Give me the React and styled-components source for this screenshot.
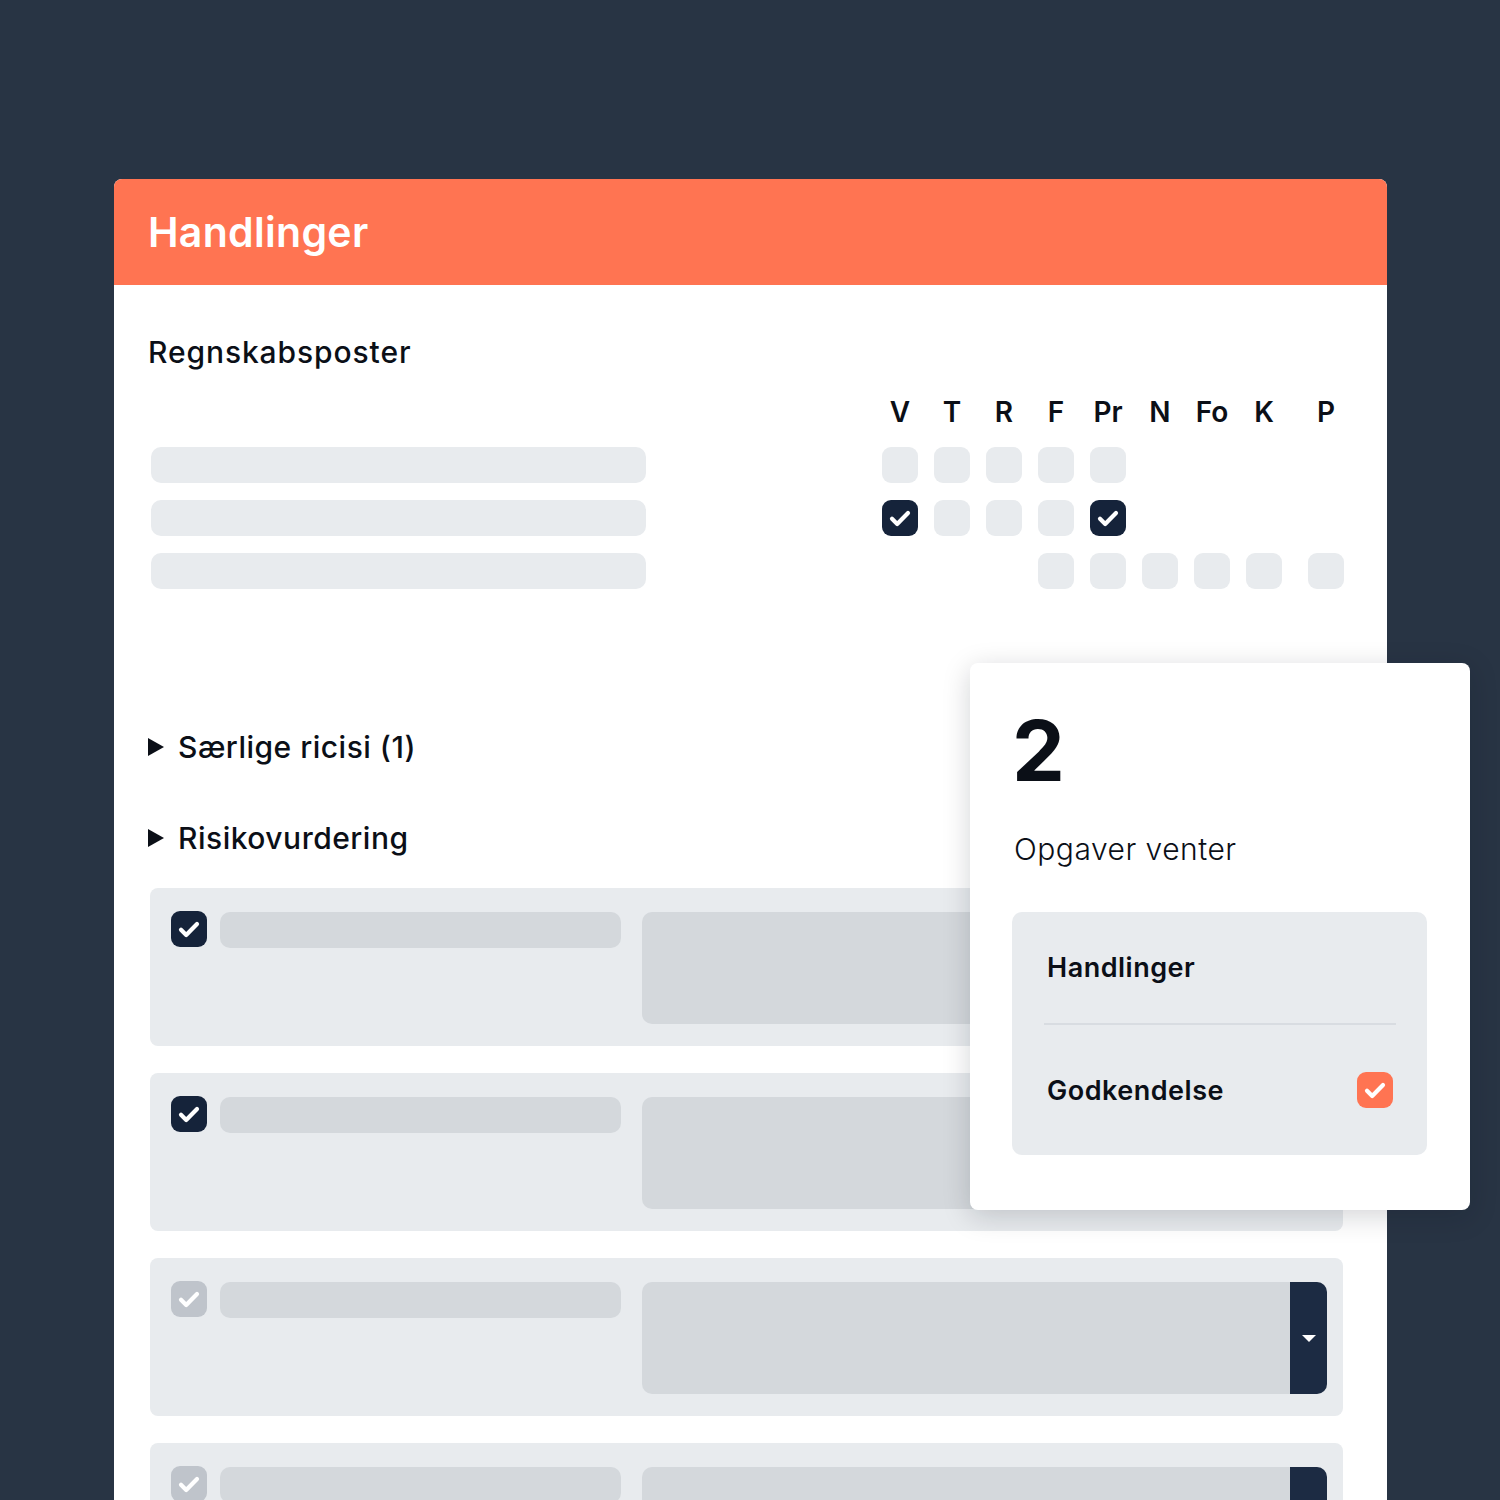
import React from 'react';
import styled, { createGlobalStyle } from 'styled-components';

const GlobalStyle = createGlobalStyle`
  html, body {
    margin: 0;
    padding: 0;
    background: #283444;
  }
  body {
    font-family: Inter, "Noto Sans", sans-serif;
    color: #0b0f17;
  }
`;

const columns = ['V', 'T', 'R', 'F', 'Pr', 'N', 'Fo', 'K', 'P'];

// which columns have a box per row: null = none, 0 = empty, 1 = checked
const rows = [
  [0, 0, 0, 0, 0, null, null, null, null],
  [1, 0, 0, 0, 1, null, null, null, null],
  [null, null, null, 0, 0, 0, 0, 0, 0],
];

const tasks = [
  { checked: true },
  { checked: true },
  { checked: false },
  { checked: false },
];

const Check = () => (
  <svg width="36" height="36" viewBox="0 0 36 36" fill="none">
    <path
      d="M10 18.8l5.2 5.2L26 13"
      stroke="#fff"
      strokeWidth="4.2"
      strokeLinecap="round"
      strokeLinejoin="round"
    />
  </svg>
);

export default function App() {
  return (
    <Page>
      <GlobalStyle />
      <Card>
        <CardHeader>Handlinger</CardHeader>
        <CardBody>
          <SectionTitle>Regnskabsposter</SectionTitle>
          <Grid>
            <span />
            <span />
            {columns.map((c, i) => (
              <ColLabel key={c} $last={i === columns.length - 1}>{c}</ColLabel>
            ))}
            {rows.map((row, r) => (
              <React.Fragment key={r}>
                <LineBar />
                <span />
                {row.map((v, i) =>
                  v === null ? (
                    <span key={i} />
                  ) : (
                    <Box key={i} $checked={v === 1} $last={i === columns.length - 1}>
                      {v === 1 && <Check />}
                    </Box>
                  )
                )}
              </React.Fragment>
            ))}
          </Grid>

          <Accordion $first>
            <Arrow />
            Særlige ricisi (1)
          </Accordion>
          <Accordion>
            <Arrow />
            Risikovurdering
          </Accordion>

          <TaskList>
            {tasks.map((t, i) => (
              <TaskCard key={i}>
                <TaskCheck $checked={t.checked}>
                  <Check />
                </TaskCheck>
                <TaskBar />
                <SelectBox>
                  <SelectButton>
                    <Caret />
                  </SelectButton>
                </SelectBox>
              </TaskCard>
            ))}
          </TaskList>
        </CardBody>
      </Card>

      <Popup>
        <BigNumber>2</BigNumber>
        <PopupLabel>Opgaver venter</PopupLabel>
        <InnerBox>
          <InnerRow $height={113} $divider>Handlinger</InnerRow>
          <InnerRow $height={130}>
            Godkendelse
            <OrangeCheck>
              <Check />
            </OrangeCheck>
          </InnerRow>
        </InnerBox>
      </Popup>
    </Page>
  );
}

const Page = styled.div`
  position: relative;
  height: 1500px;
  overflow: hidden;
  padding-top: 179px;
  box-sizing: border-box;
`;

const Card = styled.div`
  margin-left: 114px;
  width: 1273px;
  background: #fff;
  border-radius: 8px 8px 0 0;
  overflow: hidden;
`;

const CardHeader = styled.div`
  height: 106px;
  background: #ff7452;
  color: #fff;
  display: flex;
  align-items: center;
  padding-left: 34px;
  font-size: 41px;
  font-weight: 600;
  letter-spacing: 0.3px;
`;

const CardBody = styled.div`
  padding: 49px 43px 0 38px;
`;

const SectionTitle = styled.div`
  font-size: 30px;
  font-weight: 500;
  line-height: 36px;
  letter-spacing: 0.9px;
  margin-left: -4px;
  margin-bottom: 24px;
`;

const Grid = styled.div`
  display: grid;
  grid-template-columns: 494px 1fr repeat(8, 36px) 46px;
  grid-auto-rows: 36px;
  column-gap: 16px;
  row-gap: 17px;
  align-items: center;
`;

const ColLabel = styled.div`
  width: 36px;
  text-align: center;
  font-size: 28px;
  font-weight: 600;
  justify-self: ${(p) => (p.$last ? 'end' : 'start')};
`;

const LineBar = styled.div`
  height: 36px;
  margin-left: -1px;
  border-radius: 10px;
  background: #e8ebee;
`;

const Box = styled.div`
  width: 36px;
  height: 36px;
  border-radius: 9px;
  background: ${(p) => (p.$checked ? '#15233a' : '#e8ebee')};
  display: flex;
  align-items: center;
  justify-content: center;
  justify-self: ${(p) => (p.$last ? 'end' : 'start')};
`;

const Accordion = styled.div`
  display: flex;
  align-items: center;
  gap: 14px;
  margin-left: -4px;
  margin-top: ${(p) => (p.$first ? '138px' : '51px')};
  font-size: 30px;
  font-weight: 500;
  line-height: 40px;
  letter-spacing: 0.5px;
`;

const Arrow = styled.span`
  width: 0;
  height: 0;
  border-left: 16px solid #0b0f17;
  border-top: 9px solid transparent;
  border-bottom: 9px solid transparent;
`;

const TaskList = styled.div`
  margin: 30px 1px 0 -2px;
  display: flex;
  flex-direction: column;
  gap: 27px;
`;

const TaskCard = styled.div`
  display: flex;
  align-items: flex-start;
  height: 158px;
  box-sizing: border-box;
  padding: 23px 16px 22px 21px;
  background: #e8ebee;
  border-radius: 8px;
`;

const TaskCheck = styled.div`
  width: 36px;
  height: 36px;
  flex: none;
  border-radius: 9px;
  background: ${(p) => (p.$checked ? '#15233a' : '#bfc4cb')};
  display: flex;
  align-items: center;
  justify-content: center;
`;

const TaskBar = styled.div`
  width: 401px;
  height: 36px;
  margin: 1px 0 0 13px;
  border-radius: 10px;
  background: #d4d8dc;
`;

const SelectBox = styled.div`
  flex: 1;
  height: 112px;
  margin: 1px 0 0 21px;
  border-radius: 10px;
  background: #d4d8dc;
  display: flex;
  justify-content: flex-end;
  overflow: hidden;
`;

const SelectButton = styled.div`
  width: 37px;
  background: #1c2b43;
  display: flex;
  align-items: center;
  justify-content: center;
`;

const Caret = styled.span`
  width: 0;
  height: 0;
  border-top: 7px solid #fff;
  border-left: 7px solid transparent;
  border-right: 7px solid transparent;
`;

const Popup = styled.div`
  position: absolute;
  left: 970px;
  top: 663px;
  width: 500px;
  height: 547px;
  box-sizing: border-box;
  padding: 0 43px 0 42px;
  background: #fff;
  border-radius: 8px;
  box-shadow: 0 6px 28px rgba(10, 18, 30, 0.18);
`;

const BigNumber = styled.div`
  font-size: 84px;
  font-weight: 700;
  line-height: 84px;
  margin-top: 46px;
`;

const PopupLabel = styled.div`
  font-size: 30px;
  font-weight: 300;
  line-height: 36px;
  letter-spacing: 0.5px;
  margin-top: 38px;
  margin-left: 2px;
`;

const InnerBox = styled.div`
  margin-top: 45px;
  background: #e8ebee;
  border-radius: 10px;
  padding: 0 31px 0 32px;
`;

const InnerRow = styled.div`
  height: ${(p) => p.$height}px;
  box-sizing: border-box;
  display: flex;
  align-items: center;
  justify-content: space-between;
  padding-left: 3px;
  font-size: 27px;
  font-weight: 600;
  letter-spacing: 0.5px;
  border-bottom: ${(p) => (p.$divider ? '2px solid #d8dce1' : 'none')};
`;

const OrangeCheck = styled.div`
  width: 36px;
  height: 36px;
  margin-right: 3px;
  border-radius: 9px;
  background: #ff7452;
  display: flex;
  align-items: center;
  justify-content: center;
`;
